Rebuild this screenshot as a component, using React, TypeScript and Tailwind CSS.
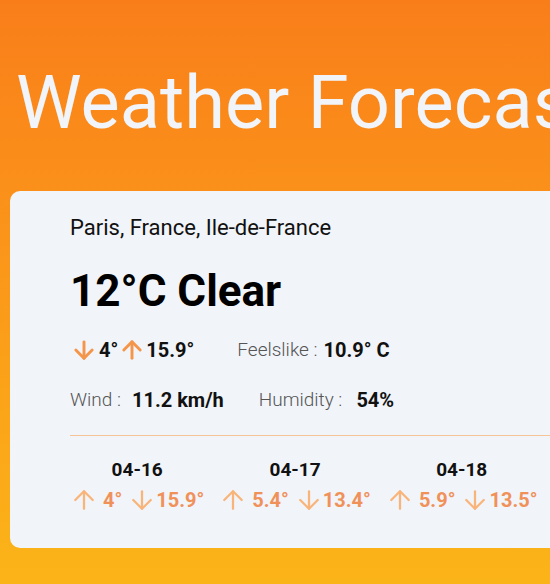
import { ArrowDown, ArrowUp } from "lucide-react"

const forecast = [
    { date: "04-16", min: "4°", max: "15.9°" },
    { date: "04-17", min: "5.4°", max: "13.4°" },
    { date: "04-18", min: "5.9°", max: "13.5°" },
]

export default function App() {
    return (
        <div className="min-h-[584px] w-full overflow-hidden bg-gradient-to-b from-[#f97e1a] to-[#fbb418] font-['Roboto',sans-serif]">
            <h1 className="whitespace-nowrap pl-4 pt-[66px] text-[74px] font-normal leading-none text-[#f1f4f9]">
                Weather Forecast
            </h1>

            <div className="ml-[10px] mt-[51px] w-[620px] rounded-[10px] bg-[#f1f4f9] pb-[33px] pl-[60px] pt-[26px]">
                <div className="text-[22px] leading-none text-[#111]">Paris, France, Ile-de-France</div>

                <div className="mt-[30px] text-[44px] font-bold leading-none text-black">12°C Clear</div>

                <div className="mt-[23px] flex h-[28px] items-center">
                    <ArrowDown size={28} className="text-[#f5954a]" strokeWidth={2.5} />
                    <span className="ml-px text-[20px] font-bold text-[#111]">4°</span>
                    <ArrowUp size={28} className="text-[#f5954a]" strokeWidth={2.5} />
                    <span className="text-[20px] font-bold text-[#111]">15.9°</span>
                    <span className="ml-[43px] text-[19px] font-light text-[#555]">Feelslike :</span>
                    <span className="ml-[6px] text-[20px] font-bold text-[#111]">10.9° C</span>
                </div>

                <div className="mt-[22px] flex h-[28px] items-center">
                    <span className="text-[19px] font-light text-[#555]">Wind :</span>
                    <span className="ml-[11px] text-[20px] font-bold text-[#111]">11.2 km/h</span>
                    <span className="ml-[35px] text-[19px] font-light text-[#555]">Humidity :</span>
                    <span className="ml-[14px] text-[20px] font-bold text-[#111]">54%</span>
                </div>

                <div className="mt-[21px] h-px bg-[#f6c496]" />

                <div className="mt-[20px] flex gap-[15px]">
                    {forecast.map((day) => (
                        <div key={day.date} className="flex flex-col items-center">
                            <div className="text-[19px] font-bold leading-7 text-[#111]">{day.date}</div>
                            <div className="mt-px flex h-[30px] items-center text-[20px] font-bold text-[#f0915a]">
                                <ArrowUp size={30} className="-ml-px text-[#f9b47a]" strokeWidth={1.8} />
                                <span className="ml-[4px]">{day.min}</span>
                                <ArrowDown size={30} className="ml-[5px] text-[#f9b47a]" strokeWidth={1.8} />
                                <span className="-ml-px">{day.max}</span>
                            </div>
                        </div>
                    ))}
                </div>
            </div>
        </div>
    )
}
